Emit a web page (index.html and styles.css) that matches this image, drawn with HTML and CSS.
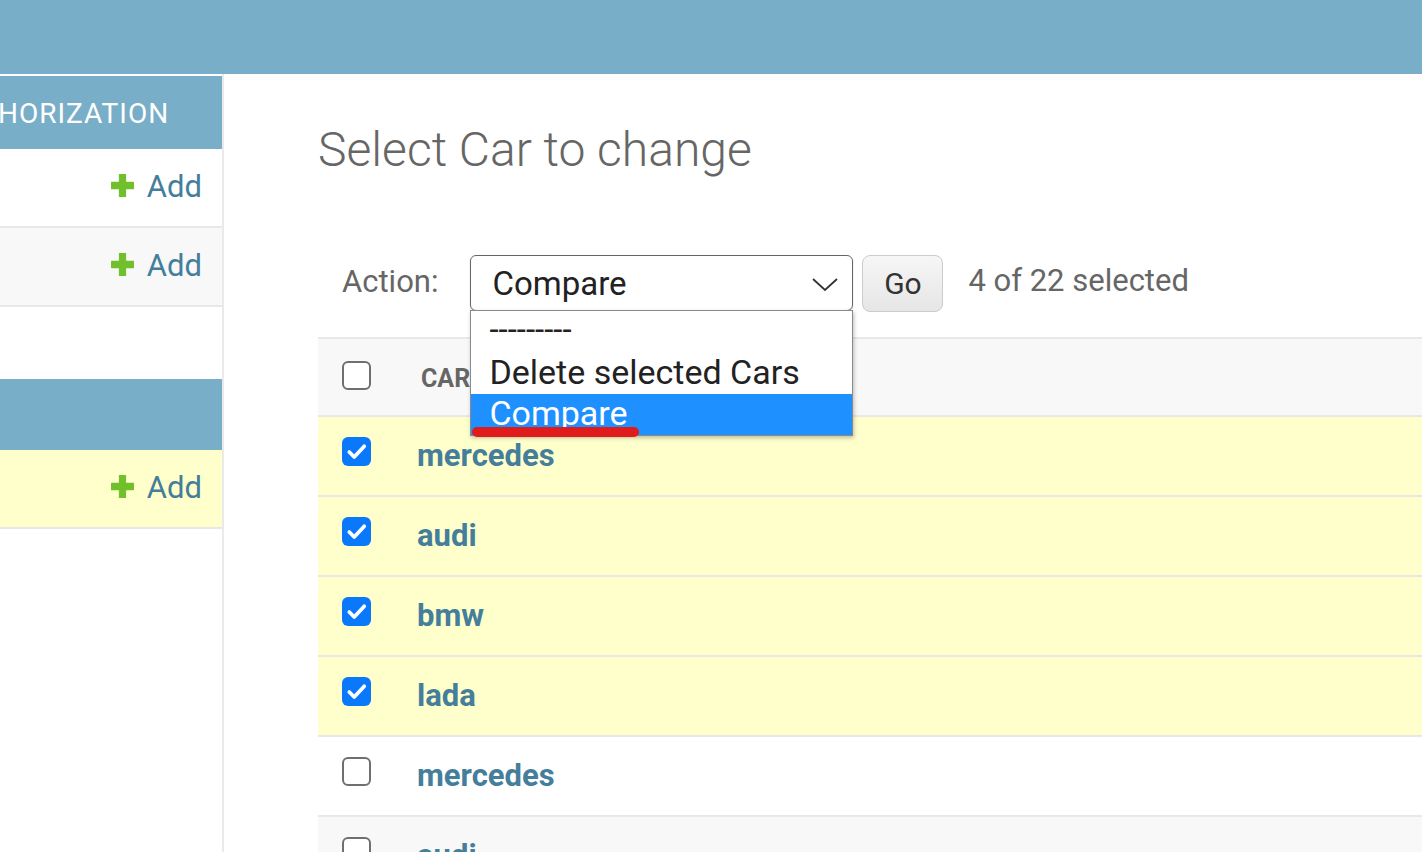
FILE: index.html
```html
<!DOCTYPE html>
<html>
<head>
<meta charset="utf-8">
<link rel="stylesheet" href="styles.css">
</head>
<body>
<header class="topbar"></header>
<div class="layout">
  <nav class="sidebar">
    <div class="module">
      <div class="caption">HORIZATION</div>
      <div class="srow"><a class="addlink"><svg class="plus" viewBox="0 0 24 24"><path d="M9 1.5h6v7.5h7.5v6H15v7.5H9V15H1.5V9H9z" fill="#70bf2b" stroke="#70bf2b" stroke-width="1" stroke-linejoin="round"/></svg>Add</a></div>
      <div class="srow alt"><a class="addlink"><svg class="plus" viewBox="0 0 24 24"><path d="M9 1.5h6v7.5h7.5v6H15v7.5H9V15H1.5V9H9z" fill="#70bf2b" stroke="#70bf2b" stroke-width="1" stroke-linejoin="round"/></svg>Add</a></div>
    </div>
    <div class="module">
      <div class="caption short"></div>
      <div class="srow current"><a class="addlink"><svg class="plus" viewBox="0 0 24 24"><path d="M9 1.5h6v7.5h7.5v6H15v7.5H9V15H1.5V9H9z" fill="#70bf2b" stroke="#70bf2b" stroke-width="1" stroke-linejoin="round"/></svg>Add</a></div>
    </div>
  </nav>
  <main class="content">
    <h1 class="title">Select Car to change</h1>
    <div class="actions">
      <label class="action-label">Action:</label>
      <div class="select-wrap">
        <div class="select">
          <span>Compare</span>
          <svg class="chev" viewBox="0 0 26 13"><path d="M1 1l12 11L25 1" fill="none" stroke="#333" stroke-width="1.8"/></svg>
        </div>
        <div class="dropdown">
          <div class="opt dash">---------</div>
          <div class="opt">Delete selected Cars</div>
          <div class="opt selected">Compare</div>
          <div class="marker"></div>
        </div>
      </div>
      <button class="go">Go</button>
      <span class="counter">4 of 22 selected</span>
    </div>
    <div class="table">
      <div class="trow head"><span class="cb"><span class="box"></span></span><span class="colname">CAR</span></div>
      <div class="trow sel"><span class="cb"><span class="box on"><svg viewBox="0 0 28 28"><path d="M7 14.5l4.8 4.8L21.5 9" fill="none" stroke="#fff" stroke-width="3.6" stroke-linecap="round" stroke-linejoin="round"/></svg></span></span><a class="name">mercedes</a></div>
      <div class="trow sel"><span class="cb"><span class="box on"><svg viewBox="0 0 28 28"><path d="M7 14.5l4.8 4.8L21.5 9" fill="none" stroke="#fff" stroke-width="3.6" stroke-linecap="round" stroke-linejoin="round"/></svg></span></span><a class="name">audi</a></div>
      <div class="trow sel"><span class="cb"><span class="box on"><svg viewBox="0 0 28 28"><path d="M7 14.5l4.8 4.8L21.5 9" fill="none" stroke="#fff" stroke-width="3.6" stroke-linecap="round" stroke-linejoin="round"/></svg></span></span><a class="name">bmw</a></div>
      <div class="trow sel"><span class="cb"><span class="box on"><svg viewBox="0 0 28 28"><path d="M7 14.5l4.8 4.8L21.5 9" fill="none" stroke="#fff" stroke-width="3.6" stroke-linecap="round" stroke-linejoin="round"/></svg></span></span><a class="name">lada</a></div>
      <div class="trow"><span class="cb"><span class="box"></span></span><a class="name">mercedes</a></div>
      <div class="trow alt"><span class="cb"><span class="box"></span></span><a class="name">audi</a></div>
    </div>
  </main>
</div>
</body>
</html>
```
FILE: styles.css
```css
html, body {
  margin: 0;
  padding: 0;
  height: 100%;
  overflow: hidden;
  background: #fff;
  font-family: Roboto, "Liberation Sans", sans-serif;
}
.topbar {
  height: 74px;
  background: #79aec8;
}
.layout {
  display: flex;
  height: calc(100% - 74px);
}
.sidebar {
  width: 222px;
  flex: none;
  border-right: 2px solid #eaeaea;
  padding-top: 2px;
  box-sizing: content-box;
}
.module {
  margin-bottom: 72px;
}
.caption {
  height: 73px;
  background: #79aec8;
  color: #fff;
  font-size: 28px;
  letter-spacing: 1px;
  line-height: 75px;
  margin-left: -2px;
  white-space: nowrap;
  overflow: hidden;
}
.caption.short { height: 71px; }
.srow {
  height: 77px;
  border-bottom: 2px solid #e8e8e8;
  display: flex;
  align-items: center;
  justify-content: flex-end;
  padding-right: 20px;
  background: #fff;
}
.srow.alt { background: #f8f8f8; }
.srow.current { background: #ffc; }
.addlink {
  display: flex;
  align-items: center;
  color: #447e9b;
  font-size: 31px;
  margin-top: -2px;
}
.plus {
  width: 25px;
  height: 25px;
  margin-right: 12px;
  margin-top: -2px;
}
.content {
  flex: 1;
  padding-left: 94px;
  min-width: 0;
  overflow: hidden;
}
.title {
  margin: 0;
  padding-top: 47px;
  font-weight: 300;
  font-size: 48px;
  line-height: 58px;
  color: #666;
}
.actions {
  display: flex;
  align-items: center;
  margin-top: 76px;
  height: 56px;
  padding-left: 24px;
}
.action-label {
  color: #666;
  font-size: 31px;
  margin-right: 32px;
  margin-top: -3px;
}
.select-wrap {
  position: relative;
  width: 383px;
  height: 56px;
}
.select {
  box-sizing: border-box;
  height: 56px;
  border: 1px solid #666;
  border-radius: 6px;
  display: flex;
  align-items: center;
  justify-content: space-between;
  padding: 0 14px 0 21px;
  font-size: 33px;
  color: #222;
  box-shadow: 0 1px 2px rgba(0,0,0,0.15);
}
.select span { margin-top: 1px; }
.chev {
  width: 26px;
  height: 13px;
  margin-top: 2px;
}
.dropdown {
  position: absolute;
  left: 0;
  top: 55px;
  width: 383px;
  box-sizing: border-box;
  background: #fff;
  border: 1px solid #8a8a8a;
  box-shadow: 1px 2px 4px rgba(0,0,0,0.25);
  z-index: 5;
}
.opt {
  height: 43px;
  line-height: 43px;
  padding-left: 18px;
  font-size: 34px;
  color: #222;
  white-space: nowrap;
}
.opt.dash { height: 40px; line-height: 38px; font-size: 33px; }
.opt.selected {
  background: #1e90ff;
  color: #fff;
  height: 41px;
  line-height: 38px;
}
.marker {
  position: absolute;
  left: 1px;
  bottom: -2px;
  width: 167px;
  height: 10px;
  border-radius: 6px;
  background: #e01b1b;
}
.go {
  margin-left: 9px;
  width: 81px;
  height: 57px;
  border: 1px solid #ccc;
  border-radius: 8px;
  background: linear-gradient(#f6f6f6, #e6e6e6);
  font-family: Roboto, "Liberation Sans", sans-serif;
  font-size: 30px;
  color: #333;
  padding: 0;
}
.counter {
  margin-left: 25px;
  color: #666;
  font-size: 31px;
  margin-top: -5px;
}
.table {
  margin-top: 26px;
  border-top: 2px solid #e8e8e8;
  width: 1200px;
}
.trow {
  height: 78px;
  border-bottom: 2px solid #e8e8e8;
  display: flex;
  align-items: center;
  background: #fff;
}
.trow.head { height: 76px; background: #f8f8f8; }
.trow.sel { background: #ffc; }
.trow.alt { background: #f8f8f8; }
.cb {
  width: 99px;
  padding-left: 24px;
  box-sizing: border-box;
  display: flex;
  align-items: center;
  margin-top: -9px;
}
.head .cb { margin-top: -4px; }
.box {
  width: 29px;
  height: 29px;
  box-sizing: border-box;
  border: 2.5px solid #6f6f6f;
  border-radius: 6px;
  background: #fff;
  display: block;
}
.box.on {
  border: none;
  background: #0a78fb;
}
.box svg {
  width: 29px;
  height: 29px;
  display: block;
}
.colname {
  font-weight: 700;
  color: #666;
  font-size: 25px;
  margin-left: 4px;
  margin-top: 2px;
}
.name {
  font-weight: 700;
  color: #447e9b;
  font-size: 31px;
  margin-top: -2px;
}
```
